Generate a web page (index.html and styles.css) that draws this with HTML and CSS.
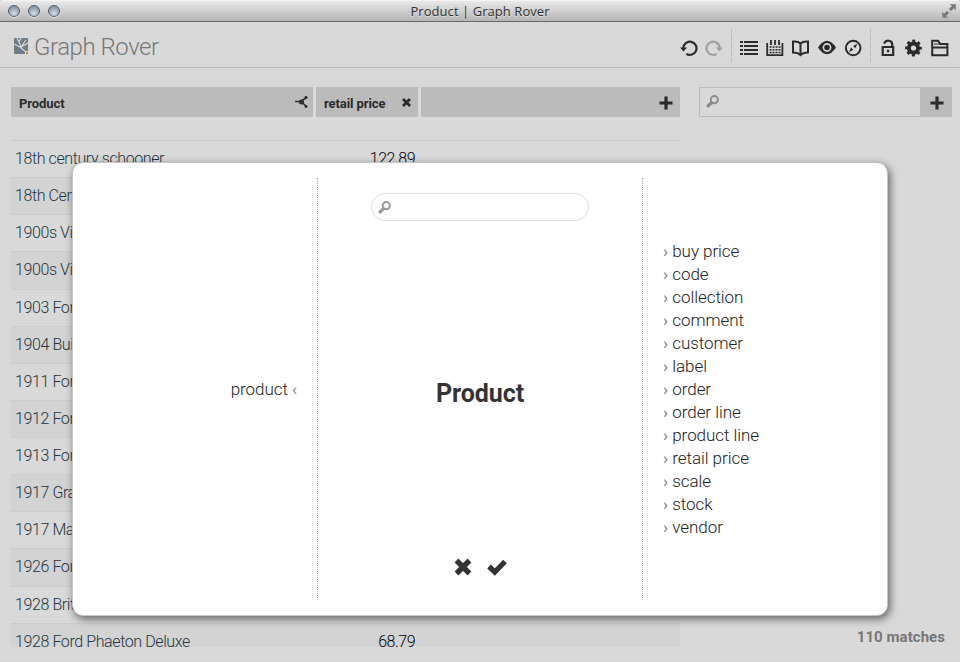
FILE: index.html
```html
<!DOCTYPE html>
<html lang="en">
<head>
<meta charset="utf-8">
<title>Product | Graph Rover</title>
<link rel="stylesheet" href="styles.css">
</head>
<body>
<div class="titlebar">
  <div class="lights"><i></i><i></i><i></i></div>
  <span class="window-title">Product | Graph Rover</span>
  <svg class="expand" viewBox="0 0 14 14"><path d="M7.500 0H14v6.500l-2-2-3 2.800L6.700 5l3-3zM0 7.500l2 2L5 6.700 7.300 9l-3 3 2.200 2H0z" fill="#777" stroke="#ccc" stroke-width=".5"/></svg>
</div>
<header class="header">
  <svg class="logo" viewBox="0 0 14 16"><rect width="14" height="16" rx="1" fill="#6f7d87"/><path d="M0 6l6 3 7 6M3 0l2 4 2 5L12 2M7 0L5 4M14 5L7 9" stroke="#d9d9d9" stroke-width="1.1" fill="none"/><path d="M11 13h3v3h-3z" fill="#d9d9d9"/><path d="M12 14h2v2h-2z" fill="#e07820"/></svg>
  <h1>Graph Rover</h1>
  <nav class="tools">
    <svg viewBox="0 0 18 18"><path d="M3.300 9.500V9a6.600 6.600 0 1 1 3 5.800" fill="none" stroke="#2b2b2b" stroke-width="2.200"/><path d="M0 8.500h7L3.500 12.500z" fill="#2b2b2b"/></svg>
    <svg class="redo" viewBox="0 0 18 18"><path d="M14.700 9.500V9a6.600 6.600 0 1 0-3 5.800" fill="none" stroke="#9f9f9f" stroke-width="2.200"/><path d="M18 8.500h-7l3.500 4z" fill="#9f9f9f"/></svg>
    <b></b>
    <svg viewBox="0 0 18 18"><path d="M0 3h3M4 3h14M0 7h3M4 7h14M0 11h3M4 11h14M0 15h3M4 15h14" stroke="#2b2b2b" stroke-width="2.200"/></svg>
    <svg viewBox="0 0 18 18"><path d="M1.200 4v12.200h15.200V4M5 1v5M9 1v5M13 1v5" fill="none" stroke="#2b2b2b" stroke-width="1.800"/><path d="M3.500 8h11M3.500 10.700h11M3.500 13.400h11" stroke="#2b2b2b" stroke-width="1.500" stroke-dasharray="2 1"/></svg>
    <svg viewBox="0 0 18 18"><path d="M1 2.500q5-.5 7.500 2 2.500-2.500 7.500-2v11q-5 0-7.500 2.500-2.500-2.500-7.500-2.500zM8.500 4.500V15" fill="none" stroke="#2b2b2b" stroke-width="2"/></svg>
    <svg viewBox="0 0 18 18"><path d="M0 8.500Q9-5 18 8.500 9 22 0 8.500z" fill="#2b2b2b"/><circle cx="9" cy="8.500" r="4.400" fill="#d9d9d9"/><circle cx="9" cy="8.500" r="2.800" fill="#2b2b2b"/></svg>
    <svg viewBox="0 0 18 18"><circle cx="9.200" cy="9" r="7.300" fill="none" stroke="#2b2b2b" stroke-width="2"/><path d="M13.500 4.700l-2.200 4.500-2.200-2.100zM5 13.200l2-4.600 2.300 2.200z" fill="#2b2b2b"/></svg>
    <b></b>
    <svg viewBox="0 0 18 18"><path d="M3.700 8h10.500v8H3.700zM13.200 8V5.500c0-4.800-6.500-5-8-.8" fill="none" stroke="#2b2b2b" stroke-width="2.200"/><path d="M7.800 10.700h2.500v2.500H7.800z" fill="#2b2b2b"/></svg>
    <svg viewBox="0 0 18 18"><circle cx="8.500" cy="9" r="4.600" fill="none" stroke="#2b2b2b" stroke-width="4"/><circle cx="8.500" cy="9" r="7.200" fill="none" stroke="#2b2b2b" stroke-width="2.400" stroke-dasharray="3 2.655" stroke-dashoffset="1.500"/></svg>
    <svg viewBox="0 0 18 18"><path d="M1.200 16.200V1.800h6l2 3.200h7.200v11.200zM1.200 8.600h15" fill="none" stroke="#2b2b2b" stroke-width="2"/><path d="M3 5h6" stroke="#2b2b2b" stroke-width="1"/></svg>
  </nav>
</header>
<main class="workspace">
  <section class="results">
    <div class="columns">
      <div class="col name">Product <svg class="share" viewBox="0 0 13 12"><path d="M0 5.500h6L12 1M6 5.500L12 11" fill="none" stroke="#2b2b2b" stroke-width="1.600"/><circle cx="6.500" cy="6" r="2.500" fill="#2b2b2b"/><circle cx="11" cy="1.500" r="1.400" fill="#2b2b2b"/><circle cx="11" cy="10.500" r="1.400" fill="#2b2b2b"/></svg></div>
      <div class="col price">retail price <svg class="close" viewBox="0 0 9 9"><path d="M1 1l7 7M8 1L1 8" stroke="#2b2b2b" stroke-width="2.800"/></svg></div>
      <div class="col rest"><svg class="plus" viewBox="0 0 14 14"><path d="M7 .5v13M.5 7h13" stroke="#2b2b2b" stroke-width="3.200"/></svg></div>
    </div>
    <div class="rows">
      <div class="row"><span>18th century schooner</span><em>122.89</em></div>
      <div class="row"><span>18th Century Vintage</span></div>
      <div class="row"><span>1900s Vintage Bi</span></div>
      <div class="row"><span>1900s Vintage Tri</span></div>
      <div class="row"><span>1903 Ford Model A</span></div>
      <div class="row"><span>1904 Buick</span></div>
      <div class="row"><span>1911 Ford</span></div>
      <div class="row"><span>1912 Ford</span></div>
      <div class="row"><span>1913 Ford</span></div>
      <div class="row"><span>1917 Grand</span></div>
      <div class="row"><span>1917 Maxwell</span></div>
      <div class="row"><span>1926 Ford</span></div>
      <div class="row"><span>1928 British</span></div>
      <div class="row"><span>1928 Ford Phaeton Deluxe</span><em>68.79</em></div>
    </div>
  </section>
  <aside class="side">
    <div class="filter">
      <svg class="lens" viewBox="0 0 12 12"><circle cx="7.700" cy="4.300" r="3.300" fill="none" stroke="#8b8b8b" stroke-width="1.800"/><path d="M5.500 6.500L1 11" stroke="#8b8b8b" stroke-width="3"/></svg>
      <div class="add"><svg class="plus" viewBox="0 0 14 14"><path d="M7 .5v13M.5 7h13" stroke="#2b2b2b" stroke-width="3.200"/></svg></div>
    </div>
    <div class="matches">110 matches</div>
  </aside>
</main>
<div class="dialog">
  <div class="incoming">product <i>‹</i></div>
  <div class="center">
    <div class="search"><svg class="lens" viewBox="0 0 12 12"><circle cx="7.700" cy="4.300" r="3.300" fill="none" stroke="#999" stroke-width="1.800"/><path d="M5.500 6.500L1 11" stroke="#999" stroke-width="3"/></svg></div>
    <h2>Product</h2>
    <div class="actions">
      <svg class="cancel" viewBox="0 0 18 18"><path d="M2.500 2.500l13 13M15.500 2.500l-13 13" stroke="#333" stroke-width="5.400"/></svg>
      <svg class="accept" viewBox="0 0 20 18"><path d="M2 8.500l5.800 5.500L18 3.500" fill="none" stroke="#333" stroke-width="5.200"/></svg>
    </div>
  </div>
  <ul class="outgoing">
    <li>buy price</li><li>code</li><li>collection</li><li>comment</li><li>customer</li><li>label</li><li>order</li><li>order line</li><li>product line</li><li>retail price</li><li>scale</li><li>stock</li><li>vendor</li>
  </ul>
</div>
</body>
</html>
```
FILE: styles.css
```css
* { box-sizing: border-box; }
body { margin: 0; width: 960px; height: 662px; overflow: hidden; background: #d9d9d9; font-family: Roboto, sans-serif; font-size: 16px; font-weight: 300; color: #2b2b2b; }
svg { display: block; flex: none; }
.titlebar { position: relative; height: 22px; display: flex; align-items: center; justify-content: center; background: linear-gradient(#e9e9e9, #b5b5b5); border-top: 1px solid #f4f4f4; border-bottom: 1px solid #686868; border-radius: 4px 4px 0 0; }
.window-title { font: 400 13px/20px "Open Sans", sans-serif; color: #333; text-shadow: 0 1px #ddd; letter-spacing: .06px; }
.lights { position: absolute; left: 8px; top: 4px; display: flex; gap: 8px; }
.lights i { width: 12px; height: 12px; border-radius: 50%; border: 1px solid #57616a; background: radial-gradient(circle at 50% 75%, #d5e0e7, #8796a2 75%); box-shadow: 0 1px #e8e8e8; }
.expand { position: absolute; right: 4px; top: 3px; width: 14px; height: 14px; }
.header { height: 46px; display: flex; align-items: center; border-bottom: 1px solid #bbb; padding: 0 7px 0 14px; }
.logo { width: 14px; height: 16px; margin-top: 2px; }
h1 { margin: 4px 0 0 6px; font-size: 24px; line-height: 28px; font-weight: 300; color: #777; letter-spacing: -.45px; }
.tools { margin-left: auto; display: flex; align-items: center; padding-top: 5px; }
.tools svg { width: 18px; height: 18px; margin: 2px 4px 0; }
.tools .redo { margin: 2px 4px 0 3px; }
.tools b { height: 33px; border-left: 1px dotted #aaa; margin: -4px 4px 0; }
.workspace { display: flex; padding: 19px 8px 0 11px; }
.results { width: 669px; }
.columns { display: flex; gap: 3px; height: 30px; margin-bottom: 23px; }
.col { display: flex; align-items: center; justify-content: space-between; background: #bbb; font-size: 13px; font-weight: 700; padding: 2px 6px 0 8px; letter-spacing: -.08px; }
.name { width: 302px; }
.price { width: 102px; padding-right: 7px; }
.rest { flex: 1; justify-content: flex-end; padding-right: 7px; }
.share { width: 13px; height: 12px; margin: -2px -1px 0 0; }
.close { width: 9px; height: 9px; margin-top: -2px; }
.plus { width: 14px; height: 14px; }
.rows { height: 507px; overflow: hidden; }
.row { display: flex; height: 37.14px; padding: 0 4px; border-top: 1px solid #ccc; line-height: 35.6px; letter-spacing: -.4px; }
.row:nth-child(even) { background: #d3d3d3; }
.row span { width: 305px; color: #1e3740; }
.row em { width: 95px; text-align: right; font-style: normal; color: #000; letter-spacing: -.5px; }
.side { margin-left: 19px; width: 253px; }
.filter { display: flex; height: 30px; border: 1px solid #bbb; justify-content: space-between; padding: 7px 0 0 6px; }
.lens { width: 13px; height: 13px; }
.add { width: 32px; height: 30px; margin: -8px -1px 0 0; display: flex; align-items: center; justify-content: center; background: #bbb; padding: 1px 0 0 2px; }
.matches { margin: 511px 7px 0 0; text-align: right; font-size: 15px; line-height: 18px; font-weight: 700; color: #777; letter-spacing: .05px; }
.dialog { position: absolute; left: 72px; top: 162px; width: 816px; height: 454px; display: flex; padding: 15px 0; background: #fff; border: 1px solid #c4c4c4; border-radius: 11px; box-shadow: 2px 3px 9px rgba(0,0,0,.55); color: #222; font-size: 17px; letter-spacing: -.05px; }
.incoming { width: 244px; padding: 200px 20px 0 0; text-align: right; line-height: 23px; }
.incoming i { font-style: normal; font-weight: 400; color: #888; }
.center { width: 326px; border: dotted #b0b0b0; border-width: 0 1px; display: flex; flex-direction: column; align-items: center; }
.search { width: 218px; height: 28px; margin-top: 15px; border: 1px solid #ddd; border-radius: 14px; padding: 7px 6px; }
h2 { margin: 158px 0 0; font-size: 25px; line-height: 30px; font-weight: 700; color: #333; }
.actions { display: flex; gap: 15px; margin-top: 149px; }
.cancel { width: 18px; height: 18px; }
.accept { width: 20px; height: 18px; }
.outgoing { list-style: none; margin: 0; padding: 62px 0 0 20px; line-height: 23px; }
.outgoing li::before { content: "› "; color: #777; font-weight: 400; }
```
